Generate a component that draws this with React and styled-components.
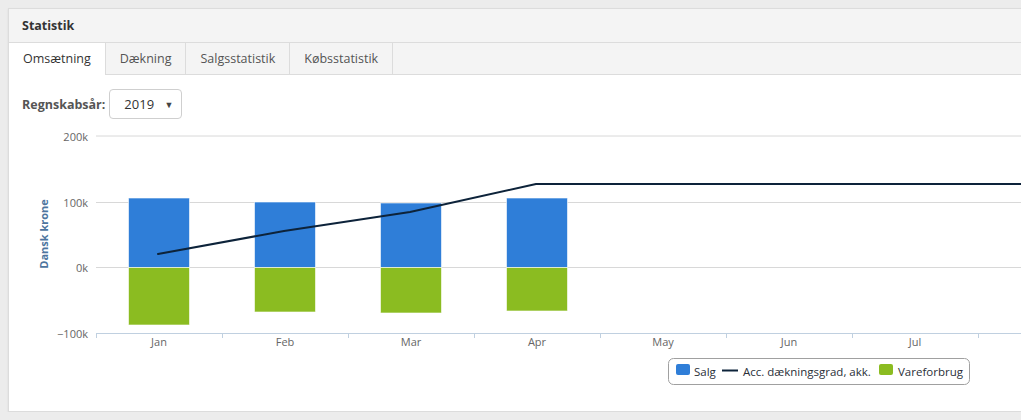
import React from "react";
import styled, { createGlobalStyle } from "styled-components";

const Global = createGlobalStyle`
  html, body { margin: 0; padding: 0; background: #ececec; overflow: hidden; }
  body { font-family: "Open Sans", "Liberation Sans", sans-serif; }
`;

const Page = styled.div`
  padding: 8px 0 0 8px;
  width: 1700px;
`;

const Panel = styled.div`
  width: 1602px;
  background: #fff;
  border: 1px solid #dcdcdc;
  box-shadow: 0 1px 2px rgba(0, 0, 0, 0.08);
`;

const Header = styled.div`
  height: 33px;
  display: flex;
  align-items: center;
  padding-left: 13px;
  background: #f4f4f4;
  border-bottom: 1px solid #dcdcdc;
  font-size: 12.5px;
  font-weight: 700;
  color: #333;
`;

const TabBar = styled.div`
  display: flex;
  height: 31px;
  background: #f4f4f4;
  border-bottom: 1px solid #dcdcdc;
`;

const Tab = styled.div`
  display: flex;
  align-items: center;
  padding: 0 14px;
  height: ${(p) => (p.$active ? "32px" : "31px")};
  border-right: 1px solid #dcdcdc;
  background: ${(p) => (p.$active ? "#fff" : "transparent")};
  color: ${(p) => (p.$active ? "#333" : "#555")};
  font-size: 12.5px;
  box-sizing: border-box;
  padding-bottom: ${(p) => (p.$active ? "1px" : "0")};
`;

const Content = styled.div`
  background: #fff;
`;

const Toolbar = styled.div`
  display: flex;
  align-items: center;
  gap: 4px;
  padding: 14px 13px 0;
`;

const Label = styled.span`
  font-size: 12.5px;
  font-weight: 700;
  color: #555;
`;

const SelectBox = styled.div`
  width: 73px;
  height: 30px;
  box-sizing: border-box;
  border: 1px solid #cfcfcf;
  border-radius: 4px;
  display: flex;
  align-items: center;
  justify-content: space-between;
  padding: 0 8px 0 14px;
  font-size: 13px;
  color: #333;
`;

const Caret = styled.span`
  font-size: 9px;
  color: #444;
`;

const ChartSvg = styled.svg`
  display: block;
  margin-top: 6px;
`;

const months = ["Jan", "Feb", "Mar", "Apr", "May", "Jun", "Jul", "Aug", "Sep", "Oct", "Nov", "Dec"];
const X0 = 96;
const CW = 126;
const VIEW_RIGHT = 1021;
const bars = [
  { top: 198, bottom: 325 },
  { top: 202, bottom: 312 },
  { top: 203, bottom: 313 },
  { top: 198, bottom: 311 },
];
const grid = [
  { y: 136, label: "200k" },
  { y: 202.5, label: "100k" },
  { y: 267.5, label: "0k" },
];
const linePts = [
  [158, 254],
  [284, 231],
  [410, 212],
  [536, 184],
  [1620, 184],
];

function Chart() {
  const axisFont = { fontFamily: "'Open Sans', 'Liberation Sans', sans-serif", fontSize: 11 };
  return (
    <ChartSvg width="1600" height="286">
      <g transform="translate(-9,-125)">
        {grid.map((g) => (
          <g key={g.label}>
            <line x1={X0} x2={1620} y1={g.y} y2={g.y} stroke="#d8d8d8" strokeWidth="1" />
            <text x={88} y={g.y + 4.5} textAnchor="end" fill="#666" style={axisFont}>
              {g.label}
            </text>
          </g>
        ))}
        <line x1={X0} x2={1620} y1={333.5} y2={333.5} stroke="#c0d0e0" strokeWidth="1" />
        <text x={88} y={338} textAnchor="end" fill="#666" style={axisFont}>
          −100k
        </text>
        {months.map((m, i) => {
          const cx = X0 + CW * i + CW / 2;
          return (
            <g key={m}>
              <line x1={X0 + CW * i + 0.5} x2={X0 + CW * i + 0.5} y1={333} y2={338} stroke="#c0d0e0" />
              {cx + 15 < VIEW_RIGHT && (
                <text x={cx} y={346} textAnchor="middle" fill="#666" style={axisFont}>
                  {m}
                </text>
              )}
            </g>
          );
        })}
        <text
          transform="translate(48,234) rotate(-90)"
          textAnchor="middle"
          fill="#4d759e"
          style={{ ...axisFont, fontWeight: 700 }}
        >
          Dansk krone
        </text>
        {bars.map((b, i) => {
          const cx = X0 + CW * i + CW / 2;
          return (
            <g key={i}>
              <rect x={cx - 30.5} y={b.top} width={61} height={267.5 - b.top} fill="#2f7ed8" stroke="#fff" strokeOpacity="0.6" />
              <rect x={cx - 30.5} y={267.5} width={61} height={b.bottom - 267.5} fill="#8bbc21" stroke="#fff" strokeOpacity="0.6" />
            </g>
          );
        })}
        <polyline
          points={linePts.map((p) => p.join(",")).join(" ")}
          fill="none"
          stroke="#0d233a"
          strokeWidth="2"
          strokeLinejoin="round"
          strokeLinecap="round"
        />
        <g style={{ fontFamily: "'Open Sans', 'Liberation Sans', sans-serif", fontSize: 11.5 }}>
          <rect x={668.5} y={358.5} width={301} height={26} rx={5} fill="#fff" stroke="#a0a0a0" />
          <rect x={676} y={364} width={14} height={11} rx={2} fill="#2f7ed8" />
          <text x={694} y={375.5} fill="#2a2f38">Salg</text>
          <line x1={722} x2={738} y1={370.5} y2={370.5} stroke="#0d233a" strokeWidth="2" />
          <text x={743} y={375.5} fill="#2a2f38">Acc. dækningsgrad, akk.</text>
          <rect x={879} y={364} width={14} height={11} rx={2} fill="#8bbc21" />
          <text x={898} y={375.5} fill="#2a2f38">Vareforbrug</text>
        </g>
      </g>
    </ChartSvg>
  );
}

export default function App() {
  const tabs = ["Omsætning", "Dækning", "Salgsstatistik", "Købsstatistik"];
  return (
    <>
      <Global />
      <Page>
        <Panel>
          <Header>Statistik</Header>
          <TabBar>
            {tabs.map((t, i) => (
              <Tab key={t} $active={i === 0}>
                {t}
              </Tab>
            ))}
          </TabBar>
          <Content>
            <Toolbar>
              <Label>Regnskabsår:</Label>
              <SelectBox>
                <span>2019</span>
                <Caret>▼</Caret>
              </SelectBox>
            </Toolbar>
            <Chart />
          </Content>
        </Panel>
      </Page>
    </>
  );
}
